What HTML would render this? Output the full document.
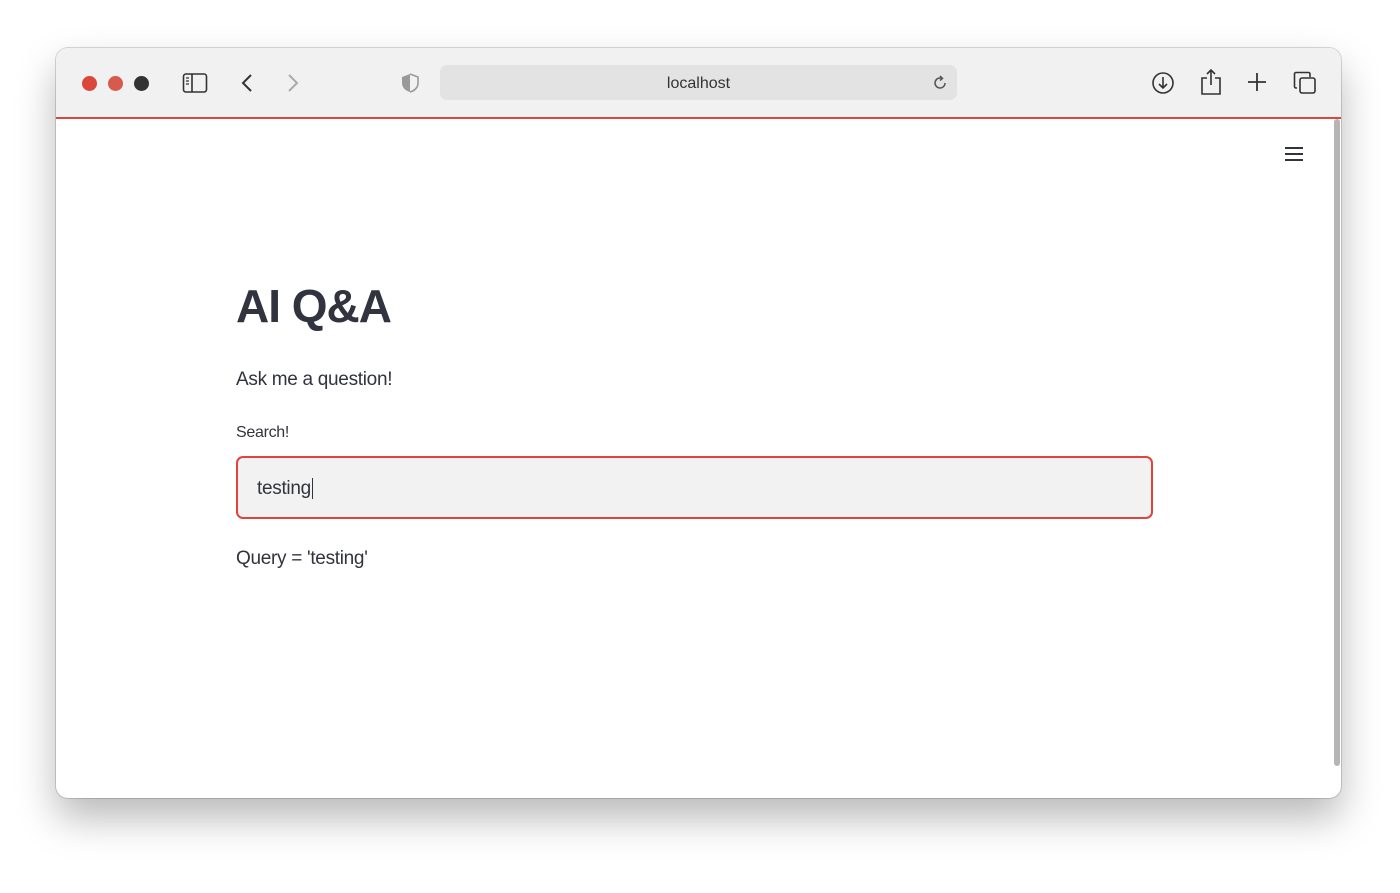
<!DOCTYPE html>
<html><head><style>
body{margin:0;width:1400px;height:893px;background:#fff;position:relative;overflow:hidden;font-family:"Liberation Sans",sans-serif}
.win{position:absolute;left:56px;top:48px;width:1285px;height:750px;border-radius:12px;background:#fff;box-shadow:0 20px 40px rgba(0,0,0,.28),0 0 0 1px rgba(0,0,0,.15);overflow:hidden}
.bar{position:absolute;left:0;top:0;width:100%;height:69px;background:#f1f1f1}
.red{position:absolute;left:0;top:69px;width:1285px;height:2px;background:#d9483b}
.dot{position:absolute;top:28px;width:15px;height:15px;border-radius:50%}
.url{position:absolute;left:384px;top:17px;width:517px;height:35px;background:#e3e3e3;border-radius:7px;text-align:center;line-height:37px;font-size:16px;color:#333}
.sb{position:absolute;left:1278px;top:71px;width:6px;height:647px;background:#b5b5b5;border-radius:3px}
.t{position:absolute;color:#31333f}
</style></head><body>
<div class="win">
<div class="bar">
<div class="dot" style="left:26px;background:#d9483b"></div>
<div class="dot" style="left:52px;background:#d65a4e"></div>
<div class="dot" style="left:78px;background:#333"></div>
<svg style="position:absolute;left:126px;top:24px" width="26" height="22" viewBox="0 0 26 22" fill="none" stroke="#333" stroke-width="1.6"><rect x="1.5" y="2" width="23" height="18" rx="2.5"/><line x1="10" y1="2" x2="10" y2="20"/><path d="M4 6h3M4 9h3M4 12h3" stroke-width="1.2"/></svg>
<svg style="position:absolute;left:184px;top:24px" width="14" height="22" viewBox="0 0 14 22" fill="none" stroke="#333" stroke-width="2"><path d="M11 3L3 11l8 8"/></svg>
<svg style="position:absolute;left:230px;top:24px" width="14" height="22" viewBox="0 0 14 22" fill="none" stroke="#aaa" stroke-width="2"><path d="M3 3l8 8-8 8"/></svg>
<svg style="position:absolute;left:344px;top:24px" width="20" height="22" viewBox="0 0 20 22"><path d="M10 2L2 5v6c0 5 4 8 8 9V2z" fill="#999"/><path d="M10 2l8 3v6c0 5-4 8-8 9" fill="none" stroke="#999" stroke-width="1.6"/></svg>
<div class="url">localhost
<svg style="position:absolute;right:8px;top:9px" width="18" height="18" viewBox="0 0 18 18" fill="none" stroke="#555" stroke-width="1.5"><path d="M14 9a5 5 0 1 1-3-4.6"/><path d="M9 2l2.5 2.4L9 6.5"/></svg></div>
<svg style="position:absolute;left:1096px;top:24px" width="22" height="22" viewBox="0 0 22 22" fill="none" stroke="#333" stroke-width="1.6"><circle cx="11" cy="11" r="10"/><path d="M11 5v11M7 12l4 4 4-4"/></svg>
<svg style="position:absolute;left:1144px;top:20px" width="22" height="28" viewBox="0 0 22 28" fill="none" stroke="#333" stroke-width="1.6"><path d="M7 10H2v16h18V10h-5M11 2v15M7 6l4-4 4 4"/></svg>
<svg style="position:absolute;left:1191px;top:24px" width="20" height="20" viewBox="0 0 20 20" fill="none" stroke="#333" stroke-width="1.8"><path d="M10 1v18M1 10h18"/></svg>
<svg style="position:absolute;left:1237px;top:23px" width="24" height="24" viewBox="0 0 24 24" fill="none" stroke="#333" stroke-width="1.6"><rect x="7" y="7" width="15" height="15" rx="2"/><path d="M4 17H3a1.5 1.5 0 0 1-1.5-1.5V3A1.5 1.5 0 0 1 3 1.5h12.5A1.5 1.5 0 0 1 17 3v3"/></svg>
</div>
<div class="red"></div>
<div class="sb"></div>
<svg style="position:absolute;left:1228px;top:98px" width="20" height="16" viewBox="0 0 20 16" stroke="#31333f" stroke-width="2"><path d="M1 2h18M1 8h18M1 14h18"/></svg>
</div>
<div class="t" style="left:236px;top:279px;font-size:46px;font-weight:bold;letter-spacing:-1px">AI Q&amp;A</div>
<div class="t" style="left:236px;top:369px;font-size:19px;letter-spacing:-0.3px">Ask me a question!</div>
<div class="t" style="left:236px;top:424px;font-size:16px;letter-spacing:-0.3px">Search!</div>
<div style="position:absolute;left:236px;top:456px;width:913px;height:59px;border:2px solid #e0443a;border-radius:7px;background:#f2f2f2"></div>
<div class="t" style="left:257px;top:478px;font-size:19px;letter-spacing:-0.3px">testing<span style="border-left:1.5px solid #31333f;margin-left:1px"></span></div>
<div class="t" style="left:236px;top:548px;font-size:19px;letter-spacing:-0.3px">Query = 'testing'</div>
</body></html>
